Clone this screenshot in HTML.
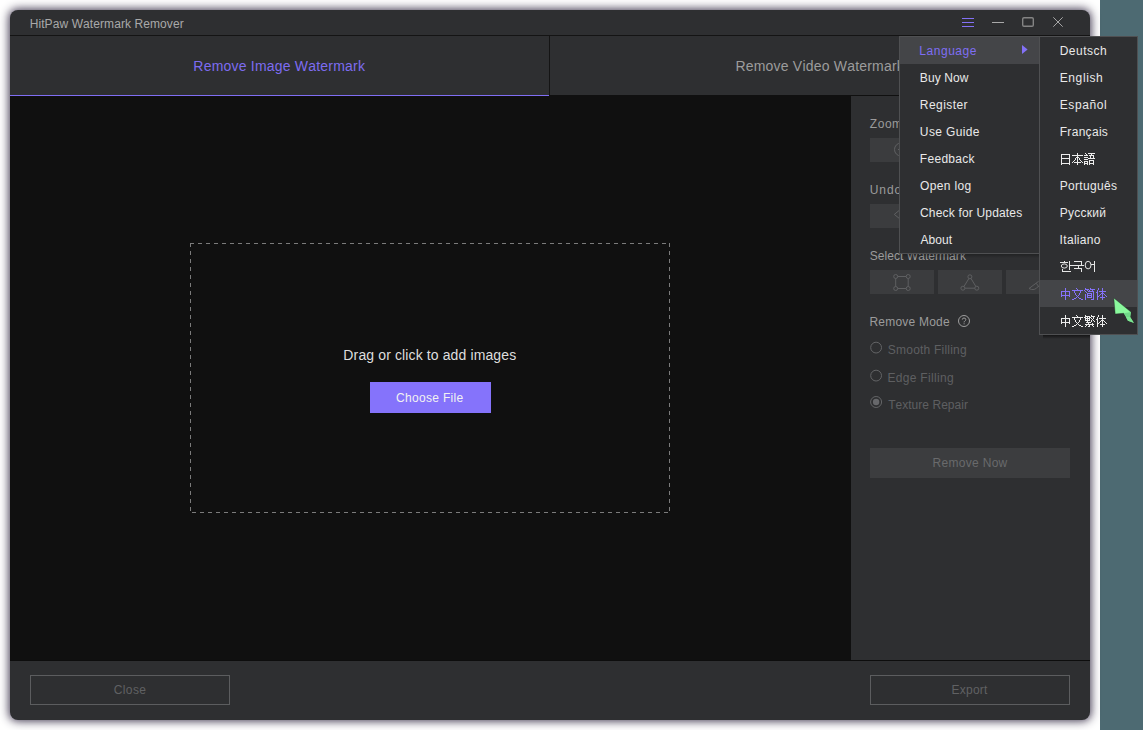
<!DOCTYPE html>
<html>
<head>
<meta charset="utf-8">
<title>HitPaw Watermark Remover</title>
<style>
html,body{margin:0;padding:0;font-family:"Liberation Sans",sans-serif;}
body{width:1143px;height:730px;position:relative;overflow:hidden;background:#ffffff;font-size:12px;line-height:14px;color:#e8e8e8;font-kerning:none;}
.abs{position:absolute;}
svg text{font-family:"Liberation Sans",sans-serif;font-kerning:none;white-space:pre;}
#teal{left:1100px;top:0;width:43px;height:730px;background:#4d6a72;}
#win{left:10px;top:10px;width:1080px;height:710px;border-radius:8px;background:#2e2f31;box-shadow:0 0 10px .5px rgba(42,33,60,.92);overflow:hidden;}
.line{background:#141414;}
.pbtn{background:#3b3c3e;}
.obtn{border:1px solid #5c5d5f;box-sizing:border-box;}
</style>
</head>
<body>
<div id="teal" class="abs"></div>
<!-- main window -->
<div id="win" class="abs">
<div class="abs line" style="left:0;top:25px;width:1080px;height:1px;"></div>
<div class="abs line" style="left:539px;top:26px;width:1px;height:59px;"></div>
<div class="abs" style="left:0;top:85px;width:1080px;height:1px;background:#101010;"></div>
<div class="abs" style="left:0;top:85px;width:539px;height:1px;background:#806ef4;"></div>
<div class="abs" style="left:0;top:86px;width:841px;height:565px;background:#101010;"></div>
<div class="abs" style="left:0;top:650px;width:1080px;height:1px;background:#0d0d0d;"></div>
<div class="abs" style="left:180px;top:233px;width:476px;height:1px;background:repeating-linear-gradient(90deg,#7b7b7b 0 4px,transparent 4px 8px);"></div>
<div class="abs" style="left:182px;top:502px;width:476px;height:1px;background:repeating-linear-gradient(90deg,#7b7b7b 0 4px,transparent 4px 8px);"></div>
<div class="abs" style="left:180px;top:233px;width:1px;height:268px;background:repeating-linear-gradient(180deg,#7b7b7b 0 4px,transparent 4px 8px);"></div>
<div class="abs" style="left:659px;top:233px;width:1px;height:268px;background:repeating-linear-gradient(180deg,#7b7b7b 0 4px,transparent 4px 8px);"></div>
<div class="abs" style="left:360px;top:372px;width:121px;height:31px;background:#8573fb;"></div>
<div class="abs pbtn" style="left:860px;top:128px;width:64px;height:24px;"></div>
<div class="abs pbtn" style="left:860px;top:194px;width:64px;height:24px;"></div>
<div class="abs pbtn" style="left:860px;top:260px;width:64px;height:24px;"></div>
<div class="abs pbtn" style="left:928px;top:260px;width:64px;height:24px;"></div>
<div class="abs pbtn" style="left:996px;top:260px;width:64px;height:24px;"></div>
<div class="abs" style="left:860px;top:438px;width:200px;height:30px;background:#3c3d3f;"></div>
<div class="abs obtn" style="left:20px;top:665px;width:200px;height:30px;"></div>
<div class="abs obtn" style="left:860px;top:665px;width:200px;height:30px;"></div>
<svg class="abs" style="left:0;top:0;" width="1080" height="710" viewBox="10 10 1080 710"><g stroke="#8371f6" stroke-width="1" shape-rendering="crispEdges"><path d="M962 18.5H974M962 22.5H974M962 26.5H974"/></g><path d="M992 22.5H1004" stroke="#a9a9a9" stroke-width="1" shape-rendering="crispEdges"/><rect x="1022.7" y="17.7" width="10.6" height="8.6" rx="1.3" fill="none" stroke="#848484" stroke-width="1.4"/><path d="M1053.3 17.3L1062.7 26.7M1062.7 17.3L1053.3 26.7" stroke="#b4b4b4" stroke-width=".9" fill="none"/><g fill="none" stroke="#5f6062" stroke-width="1"><circle cx="901" cy="149.5" r="6.5"/><path d="M898 149.5H904M901 146.5V152.5M905.8 154.3L909 157.5"/><path d="M900.6 209.3L894.3 214.4L900.6 219.5M901 214.4H909"/></g><g fill="none" stroke="#5e5f61" stroke-width="1"><path d="M897.7 276.5H906.2M897.7 288.5H906.2M895.7 278.5V286.5M908.2 278.5V286.5"/><circle cx="895.7" cy="276.5" r="2"/><circle cx="908.2" cy="276.5" r="2"/><circle cx="895.7" cy="288.5" r="2"/><circle cx="908.2" cy="288.5" r="2"/><path d="M968.9 278.5L964 286.4M971 278.5L975.8 286.4M965 288.2H974.8"/><circle cx="969.9" cy="276.8" r="2"/><circle cx="962.9" cy="288.2" r="2"/><circle cx="976.8" cy="288.2" r="2"/><path d="M1029 288.5L1038.6 281.3M1029 288.5Q1034.5 291.6 1038.6 286M1036.2 283.3L1039.5 287.5"/></g><g fill="none" stroke="#9d9d9d" stroke-width="1"><circle cx="964" cy="321" r="5.5"/><path d="M962.3 319.6Q962.3 318 964 318Q965.8 318 965.8 319.5Q965.8 320.5 964.9 321Q964.1 321.5 964.1 322.4"/></g><rect x="963.6" y="323.3" width="1" height="1" fill="#9d9d9d"/><g fill="none" stroke="#636466" stroke-width="1"><circle cx="876.1" cy="347.6" r="5.4"/><circle cx="876.1" cy="375.6" r="5.4"/><circle cx="876.1" cy="402" r="5.5"/></g><circle cx="876.1" cy="402" r="3.2" fill="#67686b"/><text x="29.67" y="28" font-size="12" fill="#a9a9a9" textLength="154.03" lengthAdjust="spacing">HitPaw Watermark Remover</text><text x="193.35" y="71" font-size="14" fill="#7d6cf0" textLength="171.63" lengthAdjust="spacing">Remove Image Watermark</text><text x="735.45" y="71" font-size="14" fill="#9c9c9c" textLength="168.33" lengthAdjust="spacing">Remove Video Watermark</text><text x="343.35" y="360" font-size="14" fill="#dedede" textLength="172.85" lengthAdjust="spacing">Drag or click to add images</text><text x="395.89" y="402" font-size="12" fill="#f2f2f2" textLength="67.34" lengthAdjust="spacing">Choose File</text><text x="869.82" y="128" font-size="12" fill="#9b9b9b" textLength="32.27" lengthAdjust="spacing">Zoom</text><text x="869.87" y="194" font-size="12" fill="#9b9b9b" textLength="31.23" lengthAdjust="spacing">Undo</text><text x="869.76" y="260" font-size="12" fill="#9b9b9b" textLength="96.13" lengthAdjust="spacing">Select Watermark</text><text x="869.42" y="326" font-size="12" fill="#9b9b9b" textLength="80.22" lengthAdjust="spacing">Remove Mode</text><text x="887.86" y="354" font-size="12" fill="#5e5f61" textLength="78.72" lengthAdjust="spacing">Smooth Filling</text><text x="887.42" y="382" font-size="12" fill="#5e5f61" textLength="66.16" lengthAdjust="spacing">Edge Filling</text><text x="888.13" y="409" font-size="12" fill="#5e5f61" textLength="79.87" lengthAdjust="spacing">Texture Repair</text><text x="932.52" y="467" font-size="12" fill="#696a6c" textLength="74.76" lengthAdjust="spacing">Remove Now</text><text x="113.69" y="694" font-size="12" fill="#606163" textLength="32.34" lengthAdjust="spacing">Close</text><text x="951.62" y="694" font-size="12" fill="#606163" textLength="35.67" lengthAdjust="spacing">Export</text></svg>
</div>
<!-- popup menus + cursor -->
<div id="menus" class="abs" style="left:0;top:0;width:1143px;height:730px;">
<div class="abs" style="left:903px;top:254px;width:136px;height:4px;background:linear-gradient(180deg,rgba(0,0,0,.28),rgba(0,0,0,0));"></div>
<div class="abs" style="left:1043px;top:335px;width:47px;height:4px;background:linear-gradient(180deg,rgba(0,0,0,.55),rgba(0,0,0,0));"></div>
<div class="abs" style="left:899px;top:36px;width:141px;height:218px;box-sizing:border-box;background:#2e2f31;border:1px solid #4f5052;"></div>
<div class="abs" style="left:900px;top:37px;width:139px;height:27px;background:#444548;"></div>
<div class="abs" style="left:1039px;top:36px;width:99px;height:299px;box-sizing:border-box;background:#2e2f31;border:1px solid #4f5052;"></div>
<div class="abs" style="left:1040px;top:280px;width:97px;height:27px;background:#444548;"></div>
<svg class="abs" style="left:899px;top:36px;" width="244" height="300" viewBox="899 36 244 300"><text x="919.32" y="55" font-size="12" fill="#7f6ef3" textLength="57.12" lengthAdjust="spacing">Language</text><text x="919.82" y="82" font-size="12" fill="#e9e9e9" textLength="48.66" lengthAdjust="spacing">Buy Now</text><text x="919.82" y="109" font-size="12" fill="#e9e9e9" textLength="47.78" lengthAdjust="spacing">Register</text><text x="919.87" y="136" font-size="12" fill="#e9e9e9" textLength="59.66" lengthAdjust="spacing">Use Guide</text><text x="919.82" y="163" font-size="12" fill="#e9e9e9" textLength="54.77" lengthAdjust="spacing">Feedback</text><text x="920.03" y="190" font-size="12" fill="#e9e9e9" textLength="51.24" lengthAdjust="spacing">Open log</text><text x="919.99" y="217" font-size="12" fill="#e9e9e9" textLength="102.24" lengthAdjust="spacing">Check for Updates</text><text x="920.38" y="244" font-size="12" fill="#e9e9e9" textLength="31.61" lengthAdjust="spacing">About</text><text x="1059.72" y="55" font-size="12" fill="#e9e9e9" textLength="46.96" lengthAdjust="spacing">Deutsch</text><text x="1059.72" y="82" font-size="12" fill="#e9e9e9" textLength="42.96" lengthAdjust="spacing">English</text><text x="1059.72" y="109" font-size="12" fill="#e9e9e9" textLength="46.99" lengthAdjust="spacing">Español</text><text x="1059.72" y="136" font-size="12" fill="#e9e9e9" textLength="48.12" lengthAdjust="spacing">Français</text><text x="1059.72" y="190" font-size="12" fill="#e9e9e9" textLength="57.22" lengthAdjust="spacing">Português</text><text x="1059.72" y="217" font-size="12" fill="#e9e9e9" textLength="46.12" lengthAdjust="spacing">Русский</text><text x="1059.59" y="244" font-size="12" fill="#e9e9e9" textLength="40.91" lengthAdjust="spacing">Italiano</text><path d="M1022 45L1027.6 49.5L1022 54Z" fill="#8371f6"/><path shape-rendering="crispEdges" fill="#ececec" d="M1061 154h9v1h-9zM1061 155h1v1h-1zM1069 155h1v1h-1zM1061 156h1v1h-1zM1069 156h1v1h-1zM1061 157h1v1h-1zM1069 157h1v1h-1zM1061 158h9v1h-9zM1061 159h1v1h-1zM1069 159h1v1h-1zM1061 160h1v1h-1zM1069 160h1v1h-1zM1061 161h1v1h-1zM1069 161h1v1h-1zM1061 162h1v1h-1zM1069 162h1v1h-1zM1061 163h9v1h-9zM1061 164h1v1h-1zM1069 164h1v1h-1zM1077 153h1v1h-1zM1077 154h1v1h-1zM1072 155h11v1h-11zM1077 156h1v1h-1zM1076 157h3v1h-3zM1075 158h1v1h-1zM1077 158h1v1h-1zM1079 158h1v1h-1zM1075 159h1v1h-1zM1077 159h1v1h-1zM1079 159h1v1h-1zM1074 160h1v1h-1zM1077 160h1v1h-1zM1080 160h1v1h-1zM1073 161h1v1h-1zM1077 161h1v1h-1zM1081 161h1v1h-1zM1072 162h1v1h-1zM1074 162h7v1h-7zM1082 162h1v1h-1zM1077 163h1v1h-1zM1077 164h1v1h-1zM1085 153h1v1h-1zM1088 153h7v1h-7zM1086 154h1v1h-1zM1091 154h1v1h-1zM1084 155h4v1h-4zM1089 155h5v1h-5zM1090 156h1v1h-1zM1093 156h1v1h-1zM1084 157h4v1h-4zM1090 157h1v1h-1zM1093 157h1v1h-1zM1088 158h7v1h-7zM1084 159h4v1h-4zM1089 160h5v1h-5zM1084 161h4v1h-4zM1089 161h1v1h-1zM1093 161h1v1h-1zM1084 162h1v1h-1zM1087 162h1v1h-1zM1089 162h1v1h-1zM1093 162h1v1h-1zM1084 163h4v1h-4zM1089 163h5v1h-5zM1084 164h1v1h-1zM1087 164h1v1h-1zM1089 164h1v1h-1zM1093 164h1v1h-1z"/><path shape-rendering="crispEdges" fill="#8572fa" d="M1065 288h1v1h-1zM1065 289h1v1h-1zM1065 290h1v1h-1zM1061 291h9v1h-9zM1061 292h1v1h-1zM1065 292h1v1h-1zM1069 292h1v1h-1zM1061 293h1v1h-1zM1065 293h1v1h-1zM1069 293h1v1h-1zM1061 294h1v1h-1zM1065 294h1v1h-1zM1069 294h1v1h-1zM1061 295h9v1h-9zM1061 296h1v1h-1zM1065 296h1v1h-1zM1069 296h1v1h-1zM1065 297h1v1h-1zM1065 298h1v1h-1zM1065 299h1v1h-1zM1076 288h1v1h-1zM1077 289h1v1h-1zM1072 290h11v1h-11zM1074 291h1v1h-1zM1080 291h1v1h-1zM1074 292h1v1h-1zM1080 292h1v1h-1zM1075 293h1v1h-1zM1079 293h1v1h-1zM1075 294h1v1h-1zM1079 294h1v1h-1zM1076 295h1v1h-1zM1078 295h1v1h-1zM1077 296h1v1h-1zM1076 297h1v1h-1zM1078 297h1v1h-1zM1074 298h2v1h-2zM1079 298h2v1h-2zM1072 299h2v1h-2zM1081 299h2v1h-2zM1085 288h1v1h-1zM1090 288h1v1h-1zM1085 289h4v1h-4zM1090 289h5v1h-5zM1084 290h1v1h-1zM1087 290h1v1h-1zM1089 290h1v1h-1zM1092 290h1v1h-1zM1085 291h1v1h-1zM1088 291h6v1h-6zM1086 292h1v1h-1zM1093 292h1v1h-1zM1087 293h5v1h-5zM1093 293h1v1h-1zM1085 294h1v1h-1zM1087 294h1v1h-1zM1091 294h1v1h-1zM1093 294h1v1h-1zM1085 295h1v1h-1zM1087 295h5v1h-5zM1093 295h1v1h-1zM1085 296h1v1h-1zM1087 296h1v1h-1zM1091 296h1v1h-1zM1093 296h1v1h-1zM1085 297h1v1h-1zM1087 297h5v1h-5zM1093 297h1v1h-1zM1085 298h1v1h-1zM1093 298h1v1h-1zM1085 299h1v1h-1zM1091 299h3v1h-3zM1098 288h1v1h-1zM1102 288h1v1h-1zM1098 289h1v1h-1zM1102 289h1v1h-1zM1097 290h1v1h-1zM1102 290h1v1h-1zM1097 291h1v1h-1zM1099 291h7v1h-7zM1096 292h2v1h-2zM1102 292h1v1h-1zM1097 293h1v1h-1zM1101 293h3v1h-3zM1097 294h1v1h-1zM1100 294h1v1h-1zM1102 294h1v1h-1zM1104 294h1v1h-1zM1097 295h1v1h-1zM1099 295h1v1h-1zM1102 295h1v1h-1zM1105 295h1v1h-1zM1097 296h2v1h-2zM1102 296h1v1h-1zM1106 296h1v1h-1zM1097 297h1v1h-1zM1100 297h5v1h-5zM1097 298h1v1h-1zM1102 298h1v1h-1zM1097 299h1v1h-1zM1102 299h1v1h-1z"/><path shape-rendering="crispEdges" fill="#ececec" d="M1065 315h1v1h-1zM1065 316h1v1h-1zM1065 317h1v1h-1zM1061 318h9v1h-9zM1061 319h1v1h-1zM1065 319h1v1h-1zM1069 319h1v1h-1zM1061 320h1v1h-1zM1065 320h1v1h-1zM1069 320h1v1h-1zM1061 321h1v1h-1zM1065 321h1v1h-1zM1069 321h1v1h-1zM1061 322h9v1h-9zM1061 323h1v1h-1zM1065 323h1v1h-1zM1069 323h1v1h-1zM1065 324h1v1h-1zM1065 325h1v1h-1zM1065 326h1v1h-1zM1076 315h1v1h-1zM1077 316h1v1h-1zM1072 317h11v1h-11zM1074 318h1v1h-1zM1080 318h1v1h-1zM1074 319h1v1h-1zM1080 319h1v1h-1zM1075 320h1v1h-1zM1079 320h1v1h-1zM1075 321h1v1h-1zM1079 321h1v1h-1zM1076 322h1v1h-1zM1078 322h1v1h-1zM1077 323h1v1h-1zM1076 324h1v1h-1zM1078 324h1v1h-1zM1074 325h2v1h-2zM1079 325h2v1h-2zM1072 326h2v1h-2zM1081 326h2v1h-2zM1085 315h1v1h-1zM1091 315h1v1h-1zM1085 316h5v1h-5zM1091 316h4v1h-4zM1084 317h2v1h-2zM1087 317h1v1h-1zM1089 317h2v1h-2zM1093 317h1v1h-1zM1085 318h5v1h-5zM1091 318h1v1h-1zM1093 318h1v1h-1zM1085 319h1v1h-1zM1087 319h1v1h-1zM1089 319h1v1h-1zM1092 319h1v1h-1zM1085 320h5v1h-5zM1091 320h1v1h-1zM1093 320h1v1h-1zM1087 321h1v1h-1zM1091 321h1v1h-1zM1094 321h1v1h-1zM1086 322h5v1h-5zM1088 323h1v1h-1zM1092 323h1v1h-1zM1085 324h9v1h-9zM1086 325h1v1h-1zM1089 325h1v1h-1zM1092 325h1v1h-1zM1085 326h1v1h-1zM1088 326h2v1h-2zM1093 326h1v1h-1zM1098 315h1v1h-1zM1102 315h1v1h-1zM1098 316h1v1h-1zM1102 316h1v1h-1zM1097 317h1v1h-1zM1102 317h1v1h-1zM1097 318h1v1h-1zM1099 318h7v1h-7zM1096 319h2v1h-2zM1102 319h1v1h-1zM1097 320h1v1h-1zM1101 320h3v1h-3zM1097 321h1v1h-1zM1100 321h1v1h-1zM1102 321h1v1h-1zM1104 321h1v1h-1zM1097 322h1v1h-1zM1099 322h1v1h-1zM1102 322h1v1h-1zM1105 322h1v1h-1zM1097 323h2v1h-2zM1102 323h1v1h-1zM1106 323h1v1h-1zM1097 324h1v1h-1zM1100 324h5v1h-5zM1097 325h1v1h-1zM1102 325h1v1h-1zM1097 326h1v1h-1zM1102 326h1v1h-1z"/><g fill="none" stroke="#e6e6e6" stroke-width="1"><path shape-rendering="crispEdges" d="M1064.5 261V262M1060 262.5H1068M1069.5 261V270M1070 265.5H1072M1062.5 269V272M1062 271.5H1071M1074 261.5H1082M1081.5 261V265M1072 265.5H1084M1078.5 266V268M1074 268.5H1082M1081.5 268V272M1094.5 261V272M1091 264.5H1094"/><ellipse cx="1064.3" cy="266" rx="3" ry="2.1"/><ellipse cx="1088.1" cy="265.1" rx="2.9" ry="3.8"/></g><path d="M1113.8 298L1131 312.1L1130.2 317.1L1134 322.9L1127.9 320.7L1123.7 313.3L1115.2 314Z" fill="#8af99d" stroke="rgba(20,30,25,.45)" stroke-width=".8" stroke-linejoin="round"/><path d="M1123.7 313.3L1131 312.1L1130.2 317.1L1127 317.6Z" fill="#70d988"/><path d="M1127 317.6L1130.2 317.1L1134 322.9L1127.9 320.7L1125.6 316.6Z" fill="#7ce792"/></svg>
</div>
</body>
</html>
